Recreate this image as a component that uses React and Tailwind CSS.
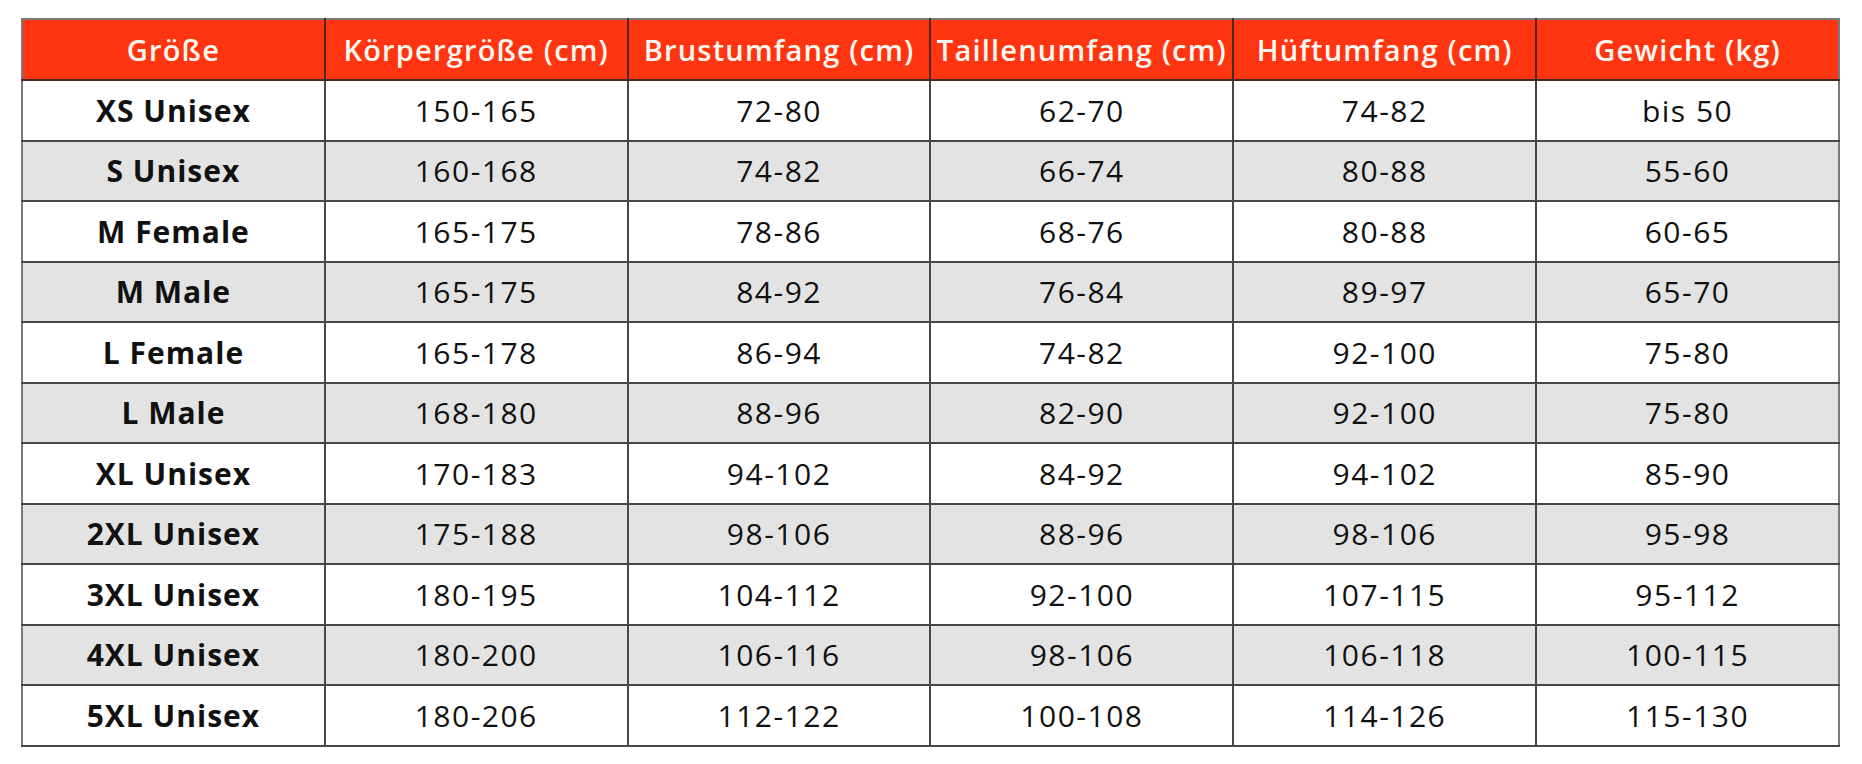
import React from "react";

const HEAD = ["Größe", "Körpergröße (cm)", "Brustumfang (cm)", "Taillenumfang (cm)", "Hüftumfang (cm)", "Gewicht (kg)"];

const ROWS = [
  ["XS Unisex", "150-165", "72-80", "62-70", "74-82", "bis 50"],
  ["S Unisex", "160-168", "74-82", "66-74", "80-88", "55-60"],
  ["M Female", "165-175", "78-86", "68-76", "80-88", "60-65"],
  ["M Male", "165-175", "84-92", "76-84", "89-97", "65-70"],
  ["L Female", "165-178", "86-94", "74-82", "92-100", "75-80"],
  ["L Male", "168-180", "88-96", "82-90", "92-100", "75-80"],
  ["XL Unisex", "170-183", "94-102", "84-92", "94-102", "85-90"],
  ["2XL Unisex", "175-188", "98-106", "88-96", "98-106", "95-98"],
  ["3XL Unisex", "180-195", "104-112", "92-100", "107-115", "95-112"],
  ["4XL Unisex", "180-200", "106-116", "98-106", "106-118", "100-115"],
  ["5XL Unisex", "180-206", "112-122", "100-108", "114-126", "115-130"],
];

export default function App() {
  return (
    <div className="min-h-screen bg-white pt-[18px] pl-[21px] pr-[22px] font-['Open_Sans',sans-serif]">
      <table className="w-full table-fixed border-collapse border-2 border-[#7a7a7a]">
        <thead>
          <tr className="h-[61px] bg-[#fe3510]">
            {HEAD.map((h) => (
              <th key={h} className="border-x-2 border-b-2 border-[#4a2a20] text-center text-[29px] font-semibold tracking-[1.2px] text-[#fff8f2] first:border-l-0 last:border-r-0">
                {h}
              </th>
            ))}
          </tr>
        </thead>
        <tbody>
          {ROWS.map((r, i) => (
            <tr key={r[0]} className={`h-[60.5px] ${i % 2 ? "bg-[#e3e3e3]" : "bg-white"}`}>
              {r.map((c, j) => (
                <td key={j}
                  className={`border-2 border-[#474747] text-center text-[30px] text-[#111] first:border-l-0 last:border-r-0 ${j === 0 ? "font-bold tracking-[1px]" : "font-normal tracking-[1.5px]"}`}>
                  {c}
                </td>
              ))}
            </tr>
          ))}
        </tbody>
      </table>
    </div>
  );
}
